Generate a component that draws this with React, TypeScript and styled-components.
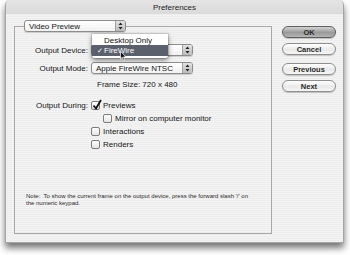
import { createGlobalStyle, styled } from "styled-components";

const GlobalStyle = createGlobalStyle`
  html, body { margin: 0; padding: 0; background: #fff; }
  body {
    width: 350px;
    height: 255px;
    overflow: hidden;
    font-family: "Liberation Sans", Arial, sans-serif;
    color: #161616;
  }
`;

const Window = styled.div`
  box-sizing: border-box;
  margin-left: 5px;
  width: 339px;
  height: 243px;
  display: flex;
  flex-direction: column;
  border: 1px solid #a4a4a4;
  border-top: none;
  border-radius: 5px 5px 0 0;
  background: repeating-linear-gradient(#ededed 0 1px, #f3f3f3 1px 2px);
  box-shadow: 0 5px 7px rgba(0, 0, 0, 0.55);
`;

const TitleBar = styled.div`
  height: 14px;
  display: flex;
  align-items: center;
  justify-content: center;
  font-size: 8px;
  color: #222;
  border-radius: 5px 5px 0 0;
  background: linear-gradient(#e4e4e4, #dadada);
`;

const Body = styled.div`
  flex: 1;
  display: flex;
  padding: 6px 7px 8px 8px;
  gap: 10px;
`;

const GroupBox = styled.fieldset`
  flex: 1;
  margin: 0;
  padding: 0 0 26px 0;
  border: 1px solid #a8a8a8;
  display: flex;
  flex-direction: column;
  min-width: 0;
`;

const Legend = styled.legend`
  margin-left: 9px;
  padding: 0;
  height: 12px;
`;

const Popup = styled.div<{ $width: number }>`
  box-sizing: border-box;
  position: relative;
  width: ${(p) => p.$width}px;
  height: 12px;
  display: flex;
  align-items: center;
  border: 1px solid #8c8c8c;
  border-radius: 3px;
  background: linear-gradient(#ffffff, #f1f1f1);
  box-shadow: 0 1px 1px rgba(0, 0, 0, 0.15);
  font-size: 8px;
`;

const PopupText = styled.span`
  flex: 1;
  padding-left: 4px;
  white-space: nowrap;
`;

const PopupCap = styled.span`
  width: 9px;
  align-self: stretch;
  display: flex;
  align-items: center;
  justify-content: center;
  border-left: 1px solid #a0a0a0;
  border-radius: 0 2px 2px 0;
  background: linear-gradient(#e2e2e2, #bcbcbc);
`;

const Row = styled.div<{ $top: number; $h?: number }>`
  display: grid;
  grid-template-columns: 73px 1fr;
  column-gap: 3px;
  align-items: center;
  height: ${(p) => p.$h ?? 12}px;
  margin-top: ${(p) => p.$top}px;
  font-size: 8px;
`;

const Label = styled.span`
  text-align: right;
  white-space: nowrap;
`;

const Cell = styled.div<{ $indent?: number }>`
  position: relative;
  display: flex;
  align-items: center;
  gap: 3px;
  padding-left: ${(p) => p.$indent ?? 0}px;
  white-space: nowrap;
`;

const Box = styled.span`
  box-sizing: border-box;
  position: relative;
  width: 9px;
  height: 9px;
  border: 1px solid #7c7c7c;
  border-radius: 2px;
  background: linear-gradient(#ffffff, #e4e4e4);
  flex: none;
`;

const Tick = styled.svg`
  position: absolute;
  left: 0px;
  top: -3px;
`;

const Note = styled.div`
  margin-top: auto;
  padding-left: 11px;
  font-size: 6px;
  line-height: 7px;
  color: #2a2a2a;
`;

const Menu = styled.div`
  position: absolute;
  left: 0;
  top: -11px;
  width: 76px;
  padding: 1px 0 2px;
  background: rgba(255, 255, 255, 0.97);
  border-radius: 0 0 3px 3px;
  box-shadow: 0 2px 5px rgba(0, 0, 0, 0.5), 0 0 0 1px rgba(0, 0, 0, 0.12);
  z-index: 2;
`;

const MenuItem = styled.div<{ $active?: boolean }>`
  position: relative;
  height: ${(p) => (p.$active ? 11 : 10)}px;
  display: flex;
  align-items: center;
  padding-left: 12px;
  font-size: 8px;
  color: ${(p) => (p.$active ? "#fff" : "#111")};
  background: ${(p) => (p.$active ? "#5b616c" : "transparent")};
`;

const Check = styled.span`
  position: absolute;
  left: 5px;
  font-size: 7px;
`;

const Cursor = styled.svg`
  position: absolute;
  left: 28px;
  top: 6px;
`;

const Buttons = styled.div`
  width: 54px;
  display: flex;
  flex-direction: column;
  padding-top: 6px;
  gap: 8px;
`;

const ButtonGroup = styled.div`
  display: flex;
  flex-direction: column;
  gap: 5px;
`;

const PushButton = styled.div<{ $default?: boolean }>`
  box-sizing: border-box;
  height: 12px;
  display: flex;
  align-items: center;
  justify-content: center;
  border-radius: 6px;
  border: 1px solid ${(p) => (p.$default ? "#5e5e5e" : "#8e8e8e")};
  background: ${(p) =>
    p.$default
      ? "linear-gradient(#d4d4d4, #9a9a9a 55%, #b4b4b4)"
      : "linear-gradient(#ffffff, #e9e9e9 55%, #f6f6f6)"};
  box-shadow: 0 1px 1px rgba(0, 0, 0, 0.2);
  font-size: 7.5px;
  font-weight: bold;
  color: #2a2a2a;
`;

const Arrows = () => (
  <svg width="5" height="8" viewBox="0 0 5 8">
    <path d="M2.5 0.5 L4.5 3 H0.5 Z M2.5 7.5 L4.5 5 H0.5 Z" fill="#222" />
  </svg>
);

const CheckBox = ({ checked }: { checked?: boolean }) => (
  <Box>
    {checked && (
      <Tick width="10" height="11" viewBox="0 0 10 11">
        <path d="M1.5 6.5 L4 9.5 L9 1" stroke="#111" strokeWidth="1.8" fill="none" />
      </Tick>
    )}
  </Box>
);

export default function App() {
  return (
    <>
      <GlobalStyle />
      <Window>
        <TitleBar>Preferences</TitleBar>
        <Body>
          <GroupBox>
            <Legend>
              <Popup $width={102}>
                <PopupText>Video Preview</PopupText>
                <PopupCap>
                  <Arrows />
                </PopupCap>
              </Popup>
            </Legend>

            <Row $top={12}>
              <Label>Output Device:</Label>
              <Cell>
                {/* the open menu covers this popup's own title */}
                <Popup $width={102}>
                  <PopupText />
                  <PopupCap>
                    <Arrows />
                  </PopupCap>
                  <Menu>
                    <MenuItem>Desktop Only</MenuItem>
                    <MenuItem $active>
                      <Check>✓</Check>
                      FireWire
                      <Cursor width="7" height="10" viewBox="0 0 7 10">
                        <path d="M0.5 0.5 V8 L2.3 6.3 L3.6 9.3 L4.8 8.8 L3.5 5.9 H6 Z" fill="#111" stroke="#fff" strokeWidth="0.7" />
                      </Cursor>
                    </MenuItem>
                  </Menu>
                </Popup>
              </Cell>
            </Row>

            <Row $top={6}>
              <Label>Output Mode:</Label>
              <Cell>
                <Popup $width={102}>
                  <PopupText>Apple FireWire NTSC</PopupText>
                  <PopupCap>
                    <Arrows />
                  </PopupCap>
                </Popup>
              </Cell>
            </Row>

            <Row $top={4}>
              <span />
              <Cell $indent={6}>Frame Size: 720 x 480</Cell>
            </Row>

            <Row $top={9} $h={13}>
              <Label>Output During:</Label>
              <Cell>
                <CheckBox checked />
                Previews
              </Cell>
            </Row>
            <Row $top={0} $h={13}>
              <span />
              <Cell $indent={12}>
                <CheckBox />
                Mirror on computer monitor
              </Cell>
            </Row>
            <Row $top={0} $h={13}>
              <span />
              <Cell>
                <CheckBox />
                Interactions
              </Cell>
            </Row>
            <Row $top={0} $h={13}>
              <span />
              <Cell>
                <CheckBox />
                Renders
              </Cell>
            </Row>

            <Note>
              Note:&nbsp; To show the current frame on the output device, press the forward slash '/' on
              <br />
              the numeric keypad.
            </Note>
          </GroupBox>

          <Buttons>
            <ButtonGroup>
              <PushButton $default>OK</PushButton>
              <PushButton>Cancel</PushButton>
            </ButtonGroup>
            <ButtonGroup>
              <PushButton>Previous</PushButton>
              <PushButton>Next</PushButton>
            </ButtonGroup>
          </Buttons>
        </Body>
      </Window>
    </>
  );
}
